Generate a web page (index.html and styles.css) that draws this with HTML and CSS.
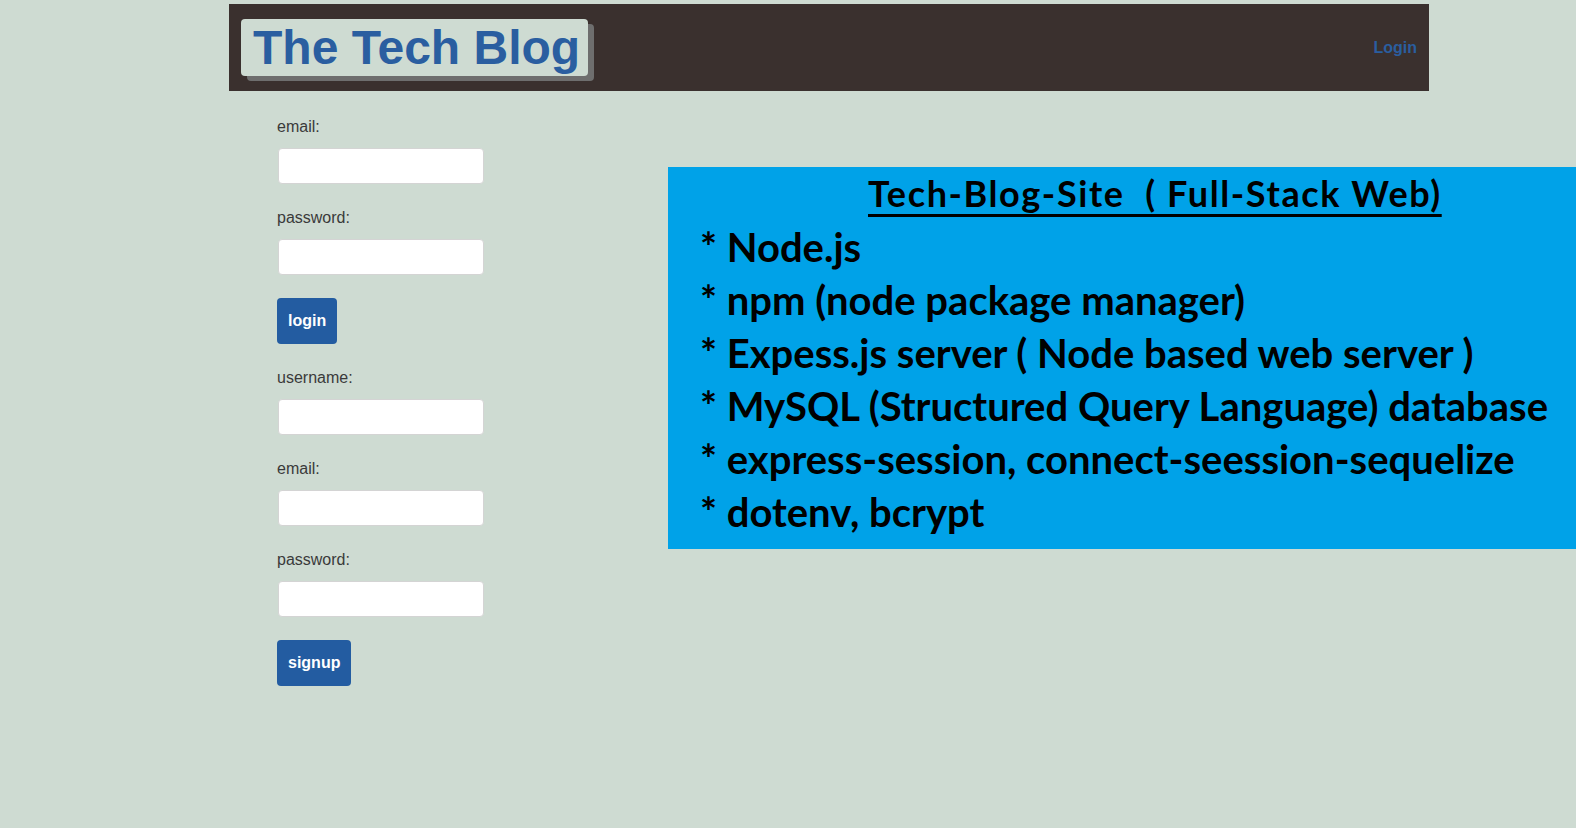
FILE: index.html
```html
<!DOCTYPE html>
<html>
<head>
<meta charset="utf-8">
<title>The Tech Blog</title>
<link rel="stylesheet" href="styles.css">
</head>
<body>
<header class="site-header">
  <h1 class="logo">The Tech Blog</h1>
  <nav class="nav"><a href="#" class="nav-link">Login</a></nav>
</header>
<main class="main">
  <section class="forms">
    <form class="form login-form">
      <label class="field-label">email:</label>
      <input class="field-input" type="text">
      <label class="field-label">password:</label>
      <input class="field-input" type="password">
      <button type="button" class="btn">login</button>
    </form>
    <form class="form signup-form">
      <label class="field-label">username:</label>
      <input class="field-input" type="text">
      <label class="field-label">email:</label>
      <input class="field-input" type="text">
      <label class="field-label">password:</label>
      <input class="field-input" type="password">
      <button type="button" class="btn">signup</button>
    </form>
  </section>
  <section class="promo">
    <h2 class="promo-title">Tech-Blog-Site&nbsp; ( Full-Stack Web)</h2>
    <ul class="promo-list">
      <li>* Node.js</li>
      <li>* npm (node package manager)</li>
      <li>* Expess.js server ( Node based web server )</li>
      <li>* MySQL (Structured Query Language) database</li>
      <li>* express-session, connect-seession-sequelize</li>
      <li>* dotenv, bcrypt</li>
    </ul>
  </section>
</main>
</body>
</html>
```

FILE: styles.css
```css
html, body {
  margin: 0;
  padding: 0;
  background: #cedbd2;
  overflow: hidden;
}
body {
  font-family: "Liberation Sans", Arial, sans-serif;
  width: 1576px;
  height: 828px;
}
.site-header {
  margin: 4px 0 0 229px;
  width: 1200px;
  height: 87px;
  background: #3a302e;
  display: flex;
  align-items: flex-start;
  justify-content: space-between;
  box-sizing: border-box;
  padding: 15px 12px 0 12px;
}
.logo {
  margin: 0;
  height: 57px;
  line-height: 57px;
  padding: 0 8px 0 12px;
  background: #cedbd2;
  color: #2a5ea0;
  font-size: 48px;
  font-weight: bold;
  border-radius: 4px;
  box-shadow: 6px 5px 0 #6e6e6e;
}
.nav {
  align-self: center;
  margin-top: -15px;
}
.nav-link {
  color: #2a5ea0;
  font-weight: bold;
  font-size: 16px;
  text-decoration: none;
}
.main {
  display: flex;
  align-items: flex-start;
}
.forms {
  width: 391px;
  padding: 27px 0 0 277px;
  display: flex;
  flex-direction: column;
}
.form {
  display: flex;
  flex-direction: column;
  align-items: flex-start;
}
.field-label {
  font-size: 16px;
  line-height: 18px;
  color: #3a3a3a;
  margin-bottom: 12px;
}
.field-input {
  width: 206px;
  height: 36px;
  box-sizing: border-box;
  border: 1px solid #d4d4d4;
  border-radius: 4px;
  background: #fff;
  margin: 0 0 25px 1px;
}
.btn {
  margin: -2px 0 0 0;
  background: #235ca1;
  color: #fff;
  border: none;
  border-radius: 4px;
  font-family: "Liberation Sans", Arial, sans-serif;
  font-size: 16px;
  font-weight: bold;
  line-height: 18px;
  padding: 14px 11px;
}
.login-form {
  margin-bottom: 25px;
}
.promo {
  margin-top: 76px;
  flex: 1;
  height: 382px;
  background: #00a2e8;
  box-sizing: border-box;
  padding: 4px 0 0 32px;
  color: #000;
  font-family: Lato, "Open Sans", sans-serif;
  font-weight: bold;
}
.promo-title {
  margin: 0 0 6px 0;
  padding-left: 168px;
  font-size: 36px;
  letter-spacing: 1.6px;
  line-height: 44px;
  font-weight: bold;
  text-decoration: underline;
  text-decoration-thickness: 3px;
  text-underline-offset: 7px;
}
.promo-list {
  list-style: none;
  margin: 0;
  padding: 0;
  font-size: 40px;
  line-height: 53px;
}
```
